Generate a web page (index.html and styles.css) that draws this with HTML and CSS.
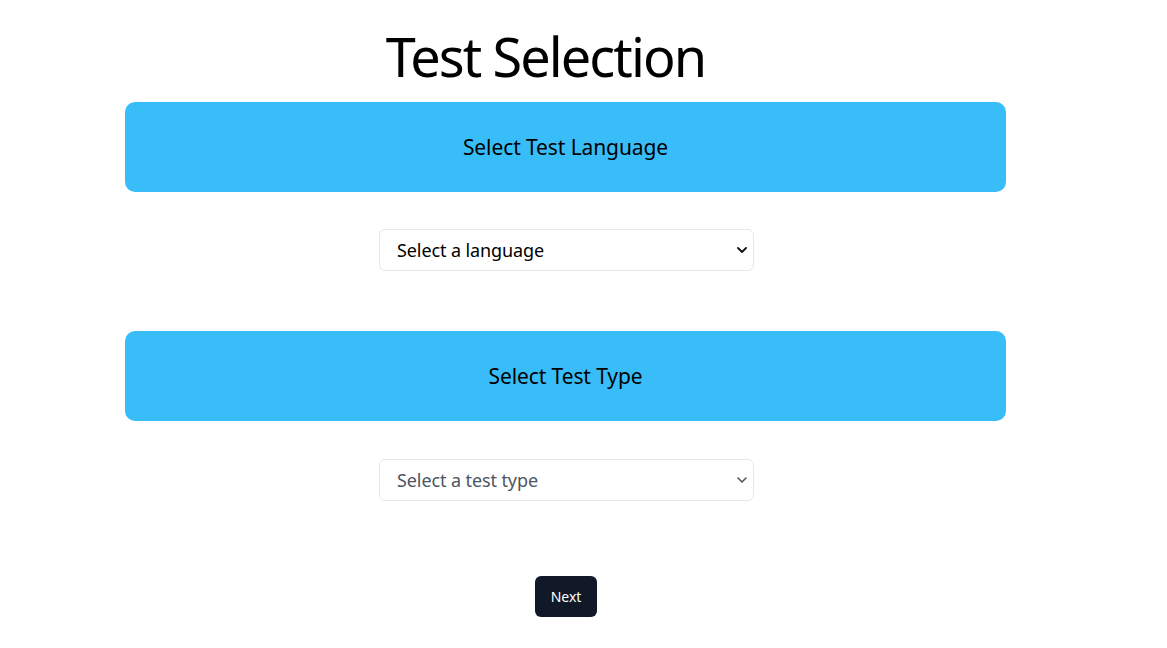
FILE: index.html
```html
<!DOCTYPE html>
<html lang="en">
<head>
<meta charset="utf-8">
<title>Test Selection</title>
<link rel="stylesheet" href="styles.css">
</head>
<body>
<main class="page">
  <h1 class="title">Test Selection</h1>
  <section class="step">
    <div class="banner">Select Test Language</div>
    <div class="select-wrap">
      <select class="select">
        <option>Select a language</option>
      </select>
      <svg class="chev" viewBox="0 0 10 6" width="10" height="6"><path d="M1 1 L5 5 L9 1" fill="none" stroke="#111" stroke-width="1.8" stroke-linecap="round" stroke-linejoin="round"/></svg>
    </div>
  </section>
  <section class="step step-2">
    <div class="banner">Select Test Type</div>
    <div class="select-wrap select-wrap-2">
      <select class="select muted">
        <option>Select a test type</option>
      </select>
      <svg class="chev" viewBox="0 0 10 6" width="10" height="6"><path d="M1 1 L5 5 L9 1" fill="none" stroke="#555" stroke-width="1.6" stroke-linecap="round" stroke-linejoin="round"/></svg>
    </div>
  </section>
  <div class="actions">
    <button class="next">Next</button>
  </div>
</main>
</body>
</html>
```

FILE: styles.css
```css
html, body {
  margin: 0;
  padding: 0;
  background: #ffffff;
}
body {
  font-family: "Noto Sans", "Open Sans", sans-serif;
  color: #000;
}
.page {
  width: 881px;
  margin-left: 125px;
  display: flex;
  flex-direction: column;
  align-items: center;
}
.title {
  margin: 18px 40px 0 0;
  font-weight: 400;
  font-size: 54px;
  line-height: 76px;
  letter-spacing: -1.9px;
  height: 84px;
}
.step {
  width: 100%;
  display: flex;
  flex-direction: column;
  align-items: center;
}
.step-2 {
  margin-top: 60px;
}
.banner {
  width: 100%;
  height: 90px;
  background: #38bdf8;
  border-radius: 10px;
  display: flex;
  align-items: center;
  justify-content: center;
  font-size: 21px;
  letter-spacing: -0.1px;
}
.select-wrap {
  position: relative;
  margin: 37px 0 0 2px;
  width: 375px;
}
.select-wrap-2 {
  margin-top: 38px;
}
.select {
  appearance: none;
  -webkit-appearance: none;
  width: 100%;
  height: 42px;
  box-sizing: border-box;
  border: 1px solid #e5e7eb;
  border-radius: 6px;
  background: #fff;
  padding: 0 30px 0 17px;
  font-family: "Noto Sans", "Open Sans", sans-serif;
  font-size: 18px;
  letter-spacing: -0.1px;
  color: #000;
  outline: none;
}
.select.muted {
  color: #4b5563;
}
.chev {
  position: absolute;
  right: 7px;
  top: 18px;
  pointer-events: none;
}
.actions {
  margin: 75px 0 0 1px;
  display: flex;
  justify-content: center;
}
.next {
  height: 41px;
  padding: 0 16px;
  background: #111827;
  color: #fff;
  border: none;
  border-radius: 6px;
  font-family: "Noto Sans", "Open Sans", sans-serif;
  font-size: 14px;
}
```
